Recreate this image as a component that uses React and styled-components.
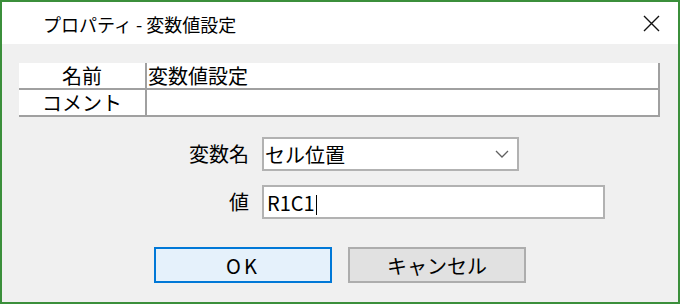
import React from 'react'
import styled, { createGlobalStyle } from 'styled-components'

const Global = createGlobalStyle`
  html, body {
    margin: 0;
    padding: 0;
    background: #f0f0f0;
  }
  body {
    font-family: "Noto Sans CJK JP", "Noto Sans", sans-serif;
    color: #000;
  }
`

const Window = styled.div`
  width: 680px;
  height: 304px;
  box-sizing: border-box;
  border: 2px solid #3b8f3b;
  background: #f0f0f0;
  display: flex;
  flex-direction: column;
`

const TitleBar = styled.div`
  height: 42px;
  flex: none;
  background: #fff;
  display: flex;
  align-items: center;
  justify-content: space-between;
  padding: 0 18px 0 41px;
`

const Title = styled.span`
  font-size: 18px;
  line-height: 42px;
  padding-top: 1px;
`

const Body = styled.div`
  flex: 1;
  display: flex;
  flex-direction: column;
  padding: 19px 18px 0 17px;
`

const PropGrid = styled.div`
  display: grid;
  grid-template-columns: 128px 1fr;
  background: #fff;
  border-right: 2px solid #a0a0a0;
`

const Cell = styled.div`
  height: 25px;
  display: flex;
  align-items: center;
  font-size: 20px;
  line-height: 1;
  border-bottom: 2px solid #a0a0a0;
  white-space: nowrap;
  ${p => p.$head ? `
    justify-content: center;
    border-right: 2px solid #a0a0a0;
  ` : `
    padding-left: 1px;
  `}
`

const Form = styled.div`
  display: flex;
  flex-direction: column;
  gap: 14px;
  margin-top: 20px;
`

const FieldRow = styled.div`
  display: flex;
  align-items: center;
  gap: 13px;
`

const Label = styled.span`
  width: 230px;
  text-align: right;
  font-size: 20px;
  line-height: 24px;
`

const Field = styled.div`
  width: ${p => p.$w}px;
  height: 34px;
  box-sizing: border-box;
  border: 2px solid #b2b2b2;
  background: #fff;
  display: flex;
  align-items: center;
  justify-content: space-between;
  padding: 0 8px 0 ${p => p.$pad}px;
  font-size: 20px;
`

const Caret = styled.span`
  display: inline-block;
  width: 1px;
  height: 20px;
  background: #000;
  margin-left: 1px;
  vertical-align: middle;
`

const Buttons = styled.div`
  display: flex;
  gap: 16px;
  padding-left: 135px;
  margin-top: 28px;
`

const Button = styled.div`
  width: 178px;
  height: 36px;
  box-sizing: border-box;
  display: flex;
  align-items: center;
  justify-content: center;
  font-size: 20px;
  border: 2px solid ${p => p.$primary ? '#0078d7' : '#adadad'};
  background: ${p => p.$primary ? '#e5f1fb' : '#e1e1e1'};
  letter-spacing: ${p => p.$primary ? '3px' : '0'};
`

const Close = () => (
  <svg width="17" height="17" viewBox="0 0 17 17">
    <path d="M1 1 L16 16 M16 1 L1 16" stroke="#111" strokeWidth="1.4" fill="none" />
  </svg>
)

const Chevron = () => (
  <svg width="14" height="8" viewBox="0 0 14 8">
    <path d="M1 1 L7 7 L13 1" stroke="#606060" strokeWidth="1.3" fill="none" />
  </svg>
)

export default function App() {
  return (
    <>
      <Global />
      <Window>
        <TitleBar>
          <Title>プロパティ - 変数値設定</Title>
          <Close />
        </TitleBar>
        <Body>
          <PropGrid>
            <Cell $head>名前</Cell>
            <Cell>変数値設定</Cell>
            <Cell $head>コメント</Cell>
            <Cell></Cell>
          </PropGrid>
          <Form>
            <FieldRow>
              <Label>変数名</Label>
              <Field $w={257} $pad={1}>
                <span>セル位置</span>
                <Chevron />
              </Field>
            </FieldRow>
            <FieldRow>
              <Label>値</Label>
              <Field $w={343} $pad={3}>
                <span>R1C1<Caret /></span>
              </Field>
            </FieldRow>
          </Form>
          <Buttons>
            <Button $primary>OK</Button>
            <Button>キャンセル</Button>
          </Buttons>
        </Body>
      </Window>
    </>
  )
}
